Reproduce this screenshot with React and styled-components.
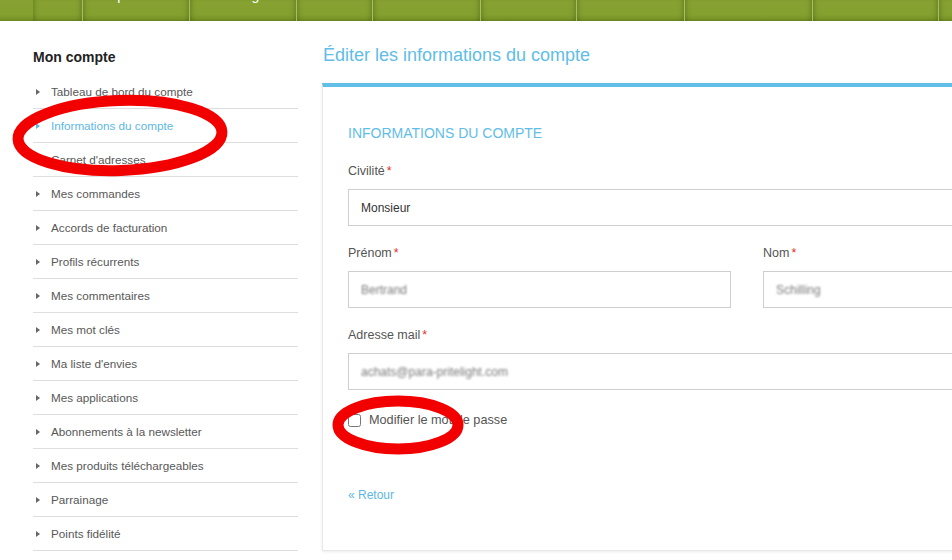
import React from "react";
import styled, { createGlobalStyle } from "styled-components";

const GlobalStyle = createGlobalStyle`
  html, body { margin: 0; padding: 0; background: #fff; }
  body { font-family: "Liberation Sans", Arial, sans-serif; overflow: hidden; }
  * { box-sizing: border-box; }
`;

const Root = styled.div`
  position: relative;
  width: 952px;
  height: 560px;
  overflow: hidden;
  background: #fff;
`;

const NavBar = styled.nav`
  display: flex;
  height: 21px;
  width: 1100px;
  background: linear-gradient(to bottom, #87a232 0%, #84a02f 70%, #7a9528 88%, #6c8622 100%);
`;

const NavSpacer = styled.div`
  width: 33px;
  flex: none;
`;

const NavItem = styled.div`
  flex: none;
  width: ${(p) => p.$w}px;
  height: 21px;
  overflow: hidden;
  display: flex;
  justify-content: center;
  align-items: flex-start;
  border-left: ${(p) => (p.$first ? "none" : "1px solid #a9bd62")};
  box-shadow: inset 5px 0 5px -4px rgba(40, 60, 0, 0.35),
    inset -5px 0 5px -4px rgba(40, 60, 0, 0.35);
`;

const NavLabel = styled.span`
  color: #fff;
  font-size: 14px;
  line-height: 17px;
  margin-top: -13px;
  white-space: nowrap;
`;

const Content = styled.div`
  display: flex;
  gap: 24px;
  padding-left: 33px;
  width: 1250px;
`;

const Sidebar = styled.aside`
  flex: none;
  width: 265px;
  padding-top: 22px;
`;

const SideTitle = styled.h2`
  margin: 0 0 4px;
  font-size: 14px;
  line-height: 28px;
  font-weight: bold;
  color: #222;
`;

const SideList = styled.ul`
  list-style: none;
  margin: 0;
  padding: 0;
`;

const SideItem = styled.li`
  display: flex;
  align-items: center;
  gap: 11px;
  height: 34px;
  padding-left: 3px;
  border-bottom: 1px solid #dedede;
  font-size: 11.7px;
  color: ${(p) => (p.$active ? "#5db7e4" : "#585858")};
`;

const Arrow = styled.span`
  width: 0;
  height: 0;
  border-top: 3.5px solid transparent;
  border-bottom: 3.5px solid transparent;
  border-left: 4px solid ${(p) => (p.$active ? "#5db7e4" : "#666")};
`;

const Main = styled.main`
  flex: none;
  width: 850px;
  padding-top: 22px;
`;

const PageTitle = styled.h1`
  margin: 0 0 16px 1px;
  font-size: 18px;
  line-height: 24px;
  font-weight: normal;
  color: #5fbde7;
`;

const Card = styled.section`
  border: 1px solid #e8e8e8;
  border-top: 4px solid #60bee7;
  box-shadow: 0 1px 3px rgba(0, 0, 0, 0.08);
  padding: 37px 25px 46px;
  background: #fff;
`;

const CardHeading = styled.h3`
  margin: 0 0 20px;
  font-size: 14px;
  line-height: 18px;
  font-weight: normal;
  color: #5fbde7;
  text-transform: uppercase;
`;

const Field = styled.div`
  margin-bottom: ${(p) => (p.$last ? "0" : "18px")};
`;

const Label = styled.label`
  display: block;
  font-size: 12.5px;
  line-height: 18px;
  color: #555;
  margin-bottom: 9px;
`;

const Req = styled.span`
  color: #e0302a;
  margin-left: 2px;
`;

const Select = styled.select`
  appearance: none;
  display: block;
  width: 100%;
  height: 37px;
  border: 1px solid #cfcfcf;
  border-radius: 0;
  background: #fff;
  padding: 0 12px;
  font-family: "Liberation Sans", Arial, sans-serif;
  font-size: 12px;
  color: #333;
  outline: none;
`;

const InputBox = styled.div`
  display: flex;
  align-items: center;
  width: 100%;
  height: 37px;
  border: 1px solid #cfcfcf;
  background: #fff;
  padding: 0 12px;
`;

const BlurredValue = styled.span`
  font-size: 12px;
  color: #7a7a7a;
  filter: blur(1.3px);
  white-space: nowrap;
`;

const Row = styled.div`
  display: grid;
  grid-template-columns: 1fr 1fr;
  gap: 32px;
`;

const CheckRow = styled.label`
  display: flex;
  align-items: center;
  gap: 8px;
  margin-top: 21px;
  height: 18px;
  font-size: 12.7px;
  color: #555;
`;

const Check = styled.input`
  margin: 0;
  width: 13px;
  height: 13px;
`;

const BackLink = styled.a`
  display: block;
  margin-top: 57px;
  font-size: 12px;
  line-height: 18px;
  color: #5db7e4;
  text-decoration: none;
`;

const Annotations = styled.svg`
  position: absolute;
  left: 0;
  top: 0;
  pointer-events: none;
`;

const navItems = [
  { w: 49, label: "" },
  { w: 107, label: "Impression" },
  { w: 107, label: "Catalogue" },
  { w: 76, label: "" },
  { w: 108, label: "" },
  { w: 96, label: "" },
  { w: 108, label: "" },
  { w: 128, label: "" },
  { w: 126, label: "" },
  { w: 120, label: "" },
];

const menu = [
  "Tableau de bord du compte",
  "Informations du compte",
  "Carnet d'adresses",
  "Mes commandes",
  "Accords de facturation",
  "Profils récurrents",
  "Mes commentaires",
  "Mes mot clés",
  "Ma liste d'envies",
  "Mes applications",
  "Abonnements à la newsletter",
  "Mes produits téléchargeables",
  "Parrainage",
  "Points fidélité",
];

export default function App() {
  return (
    <>
      <GlobalStyle />
      <Root>
        <NavBar>
          <NavSpacer />
          {navItems.map((n, i) => (
            <NavItem key={i} $w={n.w} $first={i === 0}>
              <NavLabel>{n.label}</NavLabel>
            </NavItem>
          ))}
        </NavBar>
        <Content>
          <Sidebar>
            <SideTitle>Mon compte</SideTitle>
            <SideList>
              {menu.map((m, i) => (
                <SideItem key={m} $active={i === 1}>
                  <Arrow $active={i === 1} />
                  {m}
                </SideItem>
              ))}
            </SideList>
          </Sidebar>
          <Main>
            <PageTitle>Éditer les informations du compte</PageTitle>
            <Card>
              <CardHeading>Informations du compte</CardHeading>
              <Field>
                <Label>
                  Civilité<Req>*</Req>
                </Label>
                <Select defaultValue="m">
                  <option value="m">Monsieur</option>
                  <option value="mme">Madame</option>
                </Select>
              </Field>
              <Row>
                <Field>
                  <Label>
                    Prénom<Req>*</Req>
                  </Label>
                  <InputBox>
                    <BlurredValue>Bertrand</BlurredValue>
                  </InputBox>
                </Field>
                <Field>
                  <Label>
                    Nom<Req>*</Req>
                  </Label>
                  <InputBox>
                    <BlurredValue>Schilling</BlurredValue>
                  </InputBox>
                </Field>
              </Row>
              <Field $last>
                <Label>
                  Adresse mail<Req>*</Req>
                </Label>
                <InputBox>
                  <BlurredValue>achats@para-pritelight.com</BlurredValue>
                </InputBox>
              </Field>
              <CheckRow>
                <Check type="checkbox" />
                Modifier le mot de passe
              </CheckRow>
              <BackLink href="#">« Retour</BackLink>
            </Card>
          </Main>
        </Content>
        <Annotations width="952" height="560" viewBox="0 0 952 560">
          <ellipse
            cx="120"
            cy="135.5"
            rx="102"
            ry="35"
            fill="none"
            stroke="#f20000"
            strokeWidth="11"
            transform="rotate(-2 120 135.5)"
          />
          <ellipse
            cx="398"
            cy="425"
            rx="60"
            ry="24"
            fill="none"
            stroke="#f20000"
            strokeWidth="11"
          />
        </Annotations>
      </Root>
    </>
  );
}
